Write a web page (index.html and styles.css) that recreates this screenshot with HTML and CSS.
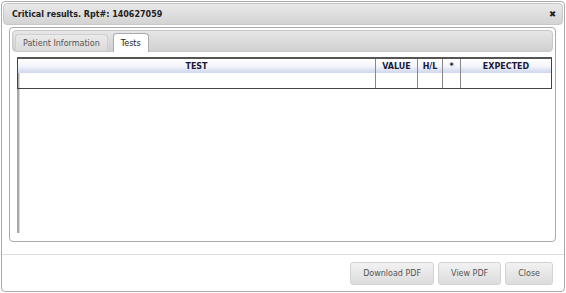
FILE: index.html
```html
<!DOCTYPE html>
<html>
<head>
<meta charset="utf-8">
<link rel="stylesheet" href="styles.css">
</head>
<body>
<div class="dialog">
  <div class="titlebar">
    <span class="title">Critical results. Rpt#: 140627059</span>
    <span class="close">&#x2716;</span>
  </div>
  <div class="content">
    <div class="tabs">
      <ul class="tabnav">
        <li class="tab">Patient Information</li>
        <li class="tab active">Tests</li>
      </ul>
      <div class="panel">
        <div class="scroller">
          <table class="grid">
            <thead>
              <tr>
                <th class="c-test">TEST</th>
                <th class="c-value">VALUE</th>
                <th class="c-hl">H/L</th>
                <th class="c-star">*</th>
                <th class="c-exp">EXPECTED</th>
              </tr>
            </thead>
            <tbody>
              <tr>
                <td></td><td></td><td></td><td></td><td></td>
              </tr>
            </tbody>
          </table>
        </div>
      </div>
    </div>
  </div>
  <div class="buttonpane">
    <button class="btn">Download PDF</button>
    <button class="btn">View PDF</button>
    <button class="btn">Close</button>
  </div>
</div>
</body>
</html>
```
FILE: styles.css
```css
html, body {
  margin: 0;
  padding: 0;
  background: #fff;
}
body {
  font-family: "DejaVu Sans", Verdana, sans-serif;
  width: 566px;
  height: 293px;
  overflow: hidden;
}
.dialog {
  margin: 1px;
  width: 562px;
  height: 289px;
  border: 1px solid #aaa;
  border-radius: 4px;
  display: flex;
  flex-direction: column;
}
.titlebar {
  height: 20px;
  margin: 1px 1px 0 1px;
  border: 1px solid #c8c8c8;
  border-radius: 4px;
  background: linear-gradient(#e9e9e9, #d3d3d3);
  display: flex;
  align-items: center;
  justify-content: space-between;
  padding: 0 6px 0 8px;
}
.title {
  font-size: 8px;
  font-weight: bold;
  color: #222;
}
.close {
  font-size: 8.5px;
  color: #222;
  font-weight: bold;
}
.content {
  padding: 2px 8px 0 7px;
}
.tabs {
  border: 1px solid #aaa;
  border-radius: 4px;
  padding: 2px;
  height: 209px;
  display: flex;
  flex-direction: column;
}
.tabnav {
  list-style: none;
  margin: 0;
  padding: 1px 2px 0 2px;
  height: 19px;
  border: 1px solid #c8c8c8;
  border-radius: 4px;
  background: linear-gradient(#e6e6e6, #d0d0d0);
  display: flex;
  align-items: flex-end;
  gap: 5px;
}
.tab {
  font-size: 8px;
  color: #555;
  height: 17px;
  padding: 0 7px;
  display: flex;
  align-items: center;
  border: 1px solid #d0d0d0;
  border-bottom: none;
  border-radius: 4px 4px 0 0;
  background: linear-gradient(#eaeaea, #dadada);
  box-sizing: border-box;
}
.tab.active {
  height: 19px;
  margin-bottom: -1px;
  background: #fff;
  color: #222;
  border-color: #aaa;
}
.panel {
  flex: 1;
  padding: 5px 2px 6px 5px;
  display: flex;
}
.scroller {
  flex: 1;
  border-left: 2px solid #a8a8a8;
  box-shadow: inset 1px 0 0 #d8d8d8;
}
.grid {
  width: 535px;
  margin-left: -2px;
  border-collapse: collapse;
  font-size: 8px;
  font-weight: bold;
  color: #1a1a3a;
}
.grid th {
  height: 14px;
  padding: 0;
  border-top: 2px solid #555;
  border-left: 1px solid #888;
  border-right: 1px solid #888;
  background: linear-gradient(#fff 0%, #f4f5fb 50%, #cfd6ec 100%);
  text-align: center;
}
.grid td {
  height: 15px;
  border: 1px solid #888;
  border-top: none;
  border-bottom: 1px solid #444;
  padding: 0;
}
.grid tr > :first-child { border-left: 1px solid #444; }
.grid tr > :last-child { border-right: 1px solid #444; }
.c-value { width: 41px; }
.c-hl { width: 24px; }
.c-star { width: 17px; }
.c-exp { width: 90px; }
.buttonpane {
  margin-top: 12px;
  border-top: 1px solid #ddd;
  display: flex;
  justify-content: flex-end;
  gap: 4px;
  padding: 7px 11px 0 0;
}
.btn {
  font-family: "DejaVu Sans", Verdana, sans-serif;
  font-size: 8px;
  color: #555;
  height: 23px;
  padding: 0 12px;
  border: 1px solid #d3d3d3;
  border-radius: 3px;
  background: linear-gradient(#f2f2f2, #dcdcdc);
}
```
